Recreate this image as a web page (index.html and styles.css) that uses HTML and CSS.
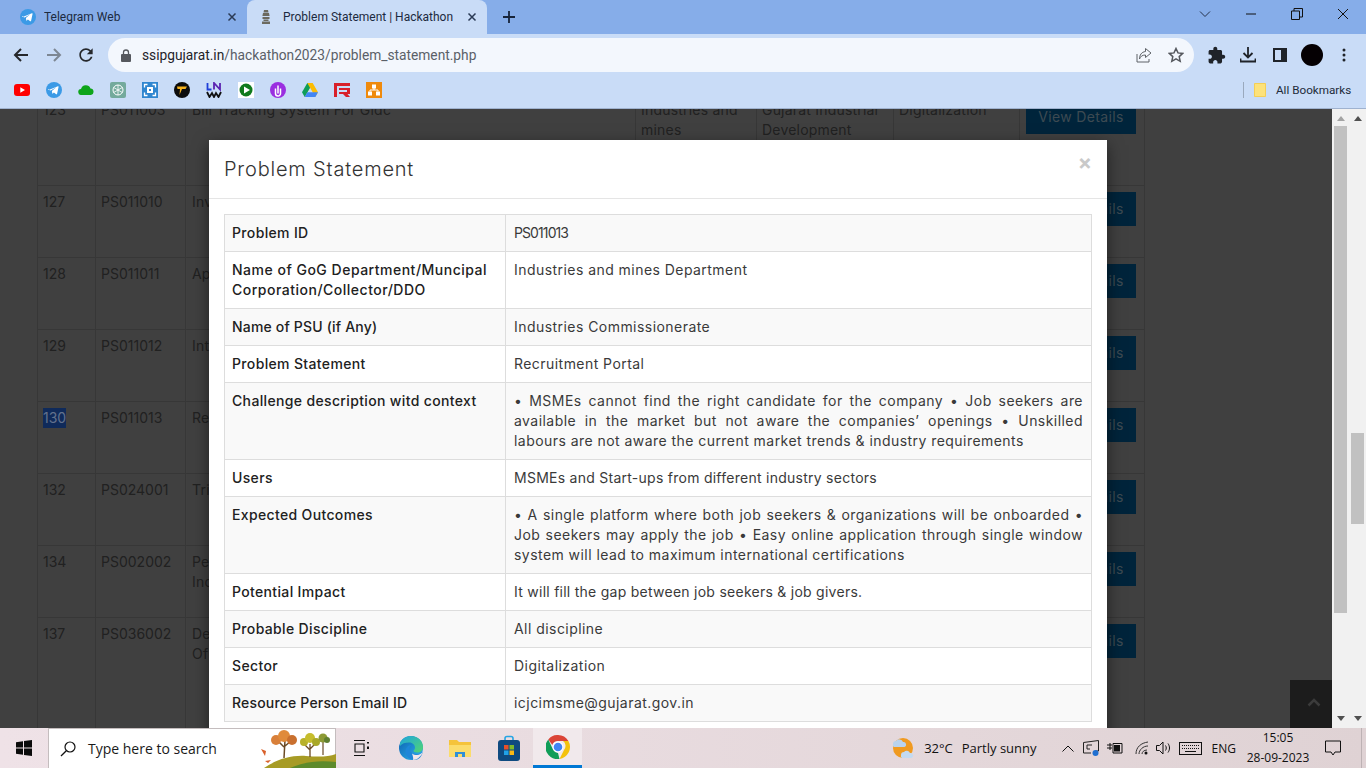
FILE: index.html
```html
<!DOCTYPE html>
<html lang="en">
<head>
<meta charset="utf-8">
<title>Problem Statement | Hackathon</title>
<link rel="stylesheet" href="styles.css">
</head>
<body>
<div class="tabstrip">
  <div class="tab">
    <svg class="fav" viewBox="0 0 16 16"><circle cx="8" cy="8" r="8" fill="#3b9ae6"/><path d="M3.200 7.800l8.700-3.600c.4-.2.8.1.7.6l-1.500 7c-.1.5-.5.6-.9.4l-2.300-1.700-1.100 1.100c-.2.2-.4.2-.5-.1l-.4-2.500 4.300-3.700-5.500 3.200-2.500-.8c-.4-.1-.4-.4 0-.6z" fill="#fff"/></svg>
    <span class="tabtitle">Telegram Web</span>
    <svg class="tabx" viewBox="0 0 10 10"><path d="M1.500 1.500l7 7M8.500 1.500l-7 7" stroke="#2a3a55" stroke-width="1.500"/></svg>
  </div>
  <div class="tab tab-active">
    <svg class="fav" viewBox="0 0 16 16"><path d="M6 1h4l.5 2.500h-5zM5 4h6l.6 3H4.400zM4.500 8h7v2h-7zM5.500 10.500h5v1.500h-5zM4 12.500h8V15H4z" fill="#6c6a60"/></svg>
    <span class="tabtitle">Problem Statement | Hackathon</span>
    <svg class="tabx" viewBox="0 0 10 10"><path d="M1.500 1.500l7 7M8.500 1.500l-7 7" stroke="#2a3a55" stroke-width="1.500"/></svg>
  </div>
  <svg class="newtab" viewBox="0 0 12 12"><path d="M6 0v12M0 6h12" stroke="#17243a" stroke-width="1.800"/></svg>
  <div class="winctl">
    <span class="wbtn"><svg viewBox="0 0 12 12" width="12" height="12"><path d="M1 3.500l5 5 5-5" fill="none" stroke="#26324a" stroke-width="1"/></svg></span>
    <span class="wbtn"><svg viewBox="0 0 12 12" width="12" height="12"><path d="M1 6h10" stroke="#111" stroke-width="1"/></svg></span>
    <span class="wbtn"><svg viewBox="0 0 12 12" width="12" height="12"><path d="M.5 3h8v8.500h-8zM3 3V.5h8.500V9H8.500" fill="none" stroke="#111" stroke-width="1"/></svg></span>
    <span class="wbtn"><svg viewBox="0 0 12 12" width="12" height="12"><path d="M1 1l10 10M11 1L1 11" stroke="#111" stroke-width="1"/></svg></span>
  </div>
</div>

<div class="toolbar">
  <span class="tbtn nav"><svg viewBox="0 0 16 16" width="16" height="16"><path d="M15 8H2M8 2L2 8l6 6" fill="none" stroke="#26282c" stroke-width="2"/></svg></span>
  <span class="tbtn nav"><svg viewBox="0 0 16 16" width="16" height="16"><path d="M1 8h13M8 2l6 6-6 6" fill="none" stroke="#7d8793" stroke-width="2"/></svg></span>
  <span class="tbtn nav"><svg viewBox="0 0 24 24" width="20" height="20"><path d="M17.650 6.350C16.200 4.900 14.210 4 12 4c-4.420 0-7.990 3.580-7.990 8s3.570 8 7.990 8c3.730 0 6.840-2.550 7.730-6h-2.080c-.82 2.330-3.040 4-5.650 4-3.310 0-6-2.690-6-6s2.690-6 6-6c1.660 0 3.140.69 4.220 1.780L13 11h7V4l-2.350 2.350z" fill="#26282c"/></svg></span>
  <div class="omnibox">
    <svg class="lock" viewBox="0 0 10 13" width="10" height="13"><path d="M2.500 5V3.500a2.500 2.500 0 0 1 5 0V5" fill="none" stroke="#55585e" stroke-width="1.300"/><rect y="5" width="10" height="8" rx="1" fill="#55585e"/></svg>
    <span class="url"><span class="host">ssipgujarat.in</span>/hackathon2023/problem_statement.php</span>
    <svg class="omni-share" viewBox="0 0 16 16" width="16" height="16"><path d="M1 7v8h12v-3" fill="none" stroke="#5f6368" stroke-width="1"/><path d="M9.500 1.500L15 6l-5.500 4.500V8C6 8 4.500 9.500 3.500 12c0-4 2-7 6-7.500z" fill="none" stroke="#5f6368" stroke-width="1"/></svg>
    <svg class="omni-star" viewBox="0 0 16 16" width="16" height="16"><path d="M8 1.500l2 4.400 4.700.5-3.500 3.200 1 4.700L8 11.900l-4.200 2.400 1-4.700-3.500-3.200 4.700-.5z" fill="none" stroke="#55585e" stroke-width="1.500"/></svg>
  </div>
  <span class="tbtn"><svg viewBox="0 0 24 24" width="19" height="19"><path d="M20.500 11H19V7c0-1.100-.9-2-2-2h-4V3.500C13 2.120 11.880 1 10.500 1S8 2.120 8 3.500V5H4c-1.100 0-1.990.9-1.990 2v3.800H3.500c1.490 0 2.700 1.210 2.700 2.700s-1.210 2.700-2.700 2.700H2V20c0 1.100.9 2 2 2h3.800v-1.500c0-1.490 1.210-2.700 2.700-2.700 1.490 0 2.700 1.210 2.700 2.700V22H17c1.100 0 2-.9 2-2v-4h1.500c1.380 0 2.500-1.120 2.500-2.500S21.880 11 20.500 11z" fill="#1f2329"/></svg></span>
  <span class="tbtn"><svg viewBox="0 0 16 16" width="16" height="16"><path d="M8 0v10M3.500 6L8 10.500 12.500 6M.5 11.500v3h15v-3" fill="none" stroke="#1f2329" stroke-width="1.800"/></svg></span>
  <span class="tbtn"><svg viewBox="0 0 14 14" width="14" height="14"><path d="M0 0h14v14H0z" fill="#1f2329"/><path d="M2 2h6v10H2z" fill="#c9dcf7"/></svg></span>
  <span class="tbtn"><span class="avatar"></span></span>
  <span class="tbtn"><svg viewBox="0 0 4 14" width="4" height="14"><circle cx="2" cy="2" r="1.500" fill="#1f2329"/><circle cx="2" cy="7" r="1.500" fill="#1f2329"/><circle cx="2" cy="12" r="1.500" fill="#1f2329"/></svg></span>
</div>

<div class="bookmarks">
  <span class="bm"><svg viewBox="0 0 16 12" width="16" height="12"><rect width="16" height="12" rx="3" fill="#f00"/><path d="M6.300 3.300v5.400L11 6z" fill="#fff"/></svg></span>
  <span class="bm"><svg viewBox="0 0 16 16" width="16" height="16"><circle cx="8" cy="8" r="8" fill="#3b9ae6"/><path d="M3.200 7.800l8.700-3.600c.4-.2.8.1.7.6l-1.500 7c-.1.5-.5.6-.9.4l-2.300-1.700-1.100 1.100c-.2.2-.4.2-.5-.1l-.4-2.500 4.300-3.700-5.500 3.200-2.500-.8c-.4-.1-.4-.4 0-.6z" fill="#fff"/></svg></span>
  <span class="bm"><svg viewBox="0 0 16 10" width="16" height="10"><path d="M3.500 10a3 3 0 0 1-.5-6A5 5 0 0 1 12.500 3.500 3.300 3.300 0 0 1 13 10z" fill="#0ea51a"/></svg></span>
  <span class="bm"><svg viewBox="0 0 16 16" width="16" height="16"><rect width="16" height="16" rx="2" fill="#74aa9c"/><circle cx="8" cy="8" r="5" fill="none" stroke="#fff" stroke-width="1"/><path d="M8 3v10M3.700 5.500l8.600 5M12.300 5.500l-8.600 5" stroke="#fff" stroke-width=".8"/></svg></span>
  <span class="bm"><svg viewBox="0 0 16 16" width="16" height="16"><rect width="16" height="16" fill="#2f86d0"/><path d="M2.500 5.500v-3h3M10.500 2.500h3v3M13.500 10.500v3h-3M5.500 13.500h-3v-3" fill="none" stroke="#fff" stroke-width="1.300"/><rect x="5" y="5" width="6" height="6" fill="#fff"/><rect x="7" y="7" width="2" height="2" fill="#2f86d0"/></svg></span>
  <span class="bm"><svg viewBox="0 0 16 16" width="16" height="16"><circle cx="8" cy="8" r="8" fill="#0c0c0c"/><path d="M3 4.500h10L11.500 7H8l-2.500 6L6 7H3.500z" fill="#f5b21d"/></svg></span>
  <span class="bm"><svg viewBox="0 0 16 16" width="16" height="16"><path d="M1.500 1v6.500h4" fill="none" stroke="#1e3fd8" stroke-width="1.800"/><path d="M8 7.500V1l6 6.500V1" fill="none" stroke="#5a22b0" stroke-width="1.800"/><path d="M1 10l2.500 5L6 11l2 4 2-4 2.500 4L15 10" fill="none" stroke="#111" stroke-width="1.800"/></svg></span>
  <span class="bm"><svg viewBox="0 0 16 16" width="16" height="16"><rect width="16" height="16" fill="#fff"/><circle cx="8" cy="8" r="6.500" fill="#0f7a1c"/><path d="M6 4.500v7L12 8z" fill="#fff"/></svg></span>
  <span class="bm"><svg viewBox="0 0 16 16" width="16" height="16"><circle cx="8" cy="8" r="8" fill="#9a2fe0"/><path d="M5.500 6.500V11.500a2.500 2.500 0 0 0 5 0V6.500M8 3.500v8" fill="none" stroke="#fff" stroke-width="1.500"/></svg></span>
  <span class="bm"><svg viewBox="0 0 16 14" width="16" height="14"><path d="M5.300 0h5.400l5.300 9.300-2.700 4.700L8 4.600 2.700 14z" fill="#fbbc04"/><path d="M5.300 0L0 9.300 2.700 14 8 4.700z" fill="#0f9d58"/><path d="M5.300 9.300H16L13.300 14H2.700z" fill="#4285f4"/></svg></span>
  <span class="bm"><svg viewBox="0 0 16 16" width="16" height="16"><path d="M0 1h16v3H3v11H0zM5 6h11v6h-2.500l2.500 3h-4l-3-3H5v-2h8V8H5z" fill="#d8202a"/></svg></span>
  <span class="bm"><svg viewBox="0 0 16 16" width="16" height="16"><rect width="16" height="16" fill="#ef8a0c"/><rect x="6" y="2.500" width="4" height="4" fill="#fff"/><rect x="2" y="9.500" width="4" height="4" fill="#fff"/><rect x="10" y="9.500" width="4" height="4" fill="#fff"/><path d="M8 6v2M4 9.500V8h8v1.500" fill="none" stroke="#fff"/></svg></span>
  <span class="bm-sep"></span>
  <svg class="bm-folder" viewBox="0 0 12 14" width="12" height="14"><path d="M.5.500h11v13H.5z" fill="#fde27a" stroke="#f5cf55"/></svg>
  <span class="bm-all">All Bookmarks</span>
</div>

<div class="viewport">
  <main class="page">
    <table class="list">
      <colgroup>
        <col class="c1"><col class="c2"><col class="c3"><col class="c4"><col class="c5"><col class="c6"><col class="c7">
      </colgroup>
      <tr class="row-first"><td>123</td><td>PS011003</td><td>Bill Tracking System For Gidc</td><td>Industries and mines Department</td><td>Gujarat Industrial Development Corporation</td><td>Digitalization</td><td><a class="view">View Details</a></td></tr>
      <tr><td>127</td><td>PS011010</td><td>Inventory</td><td></td><td></td><td></td><td><a class="view">View Details</a></td></tr>
      <tr><td>128</td><td>PS011011</td><td>Application</td><td></td><td></td><td></td><td><a class="view">View Details</a></td></tr>
      <tr><td>129</td><td>PS011012</td><td>Integrated</td><td></td><td></td><td></td><td><a class="view">View Details</a></td></tr>
      <tr><td><span class="picked">130</span></td><td>PS011013</td><td>Recruitment Portal</td><td></td><td></td><td></td><td><a class="view">View Details</a></td></tr>
      <tr><td>132</td><td>PS024001</td><td>Tribal</td><td></td><td></td><td></td><td><a class="view">View Details</a></td></tr>
      <tr><td>134</td><td>PS002002</td><td>Pet<br>Industry</td><td></td><td></td><td></td><td><a class="view">View Details</a></td></tr>
      <tr class="row-last"><td>137</td><td>PS036002</td><td>Department<br>Of</td><td></td><td></td><td></td><td><a class="view">View Details</a></td></tr>
    </table>

    <section class="modal">
      <header class="modal-head">
        <h4 class="modal-title">Problem Statement</h4>
        <span class="modal-x">×</span>
      </header>
      <div class="modal-body">
        <table class="info">
          <colgroup><col class="k"><col class="v"></colgroup>
          <tr><th>Problem ID</th><td class="num">PS011013</td></tr>
          <tr><th class="th-wide">Name of GoG Department/Muncipal Corporation/Collector/DDO</th><td>Industries and mines Department</td></tr>
          <tr><th class="th-narrow">Name of PSU (if Any)</th><td>Industries Commissionerate</td></tr>
          <tr><th>Problem Statement</th><td>Recruitment Portal</td></tr>
          <tr><th>Challenge description witd context</th><td><span class="jl">• MSMEs cannot find the right candidate for the company • Job seekers are</span><span class="jl">available in the market but not aware the companies’ openings • Unskilled</span><span class="ll">labours are not aware the current market trends &amp; industry requirements</span></td></tr>
          <tr><th>Users</th><td class="tight">MSMEs and Start-ups from different industry sectors</td></tr>
          <tr><th>Expected Outcomes</th><td><span class="jl">• A single platform where both job seekers &amp; organizations will be onboarded •</span><span class="jl">Job seekers may apply the job • Easy online application through single window</span><span class="ll">system will lead to maximum international certifications</span></td></tr>
          <tr><th>Potential Impact</th><td class="tight">It will fill the gap between job seekers &amp; job givers.</td></tr>
          <tr><th>Probable Discipline</th><td>All discipline</td></tr>
          <tr><th>Sector</th><td>Digitalization</td></tr>
          <tr><th class="th-narrow">Resource Person Email ID</th><td>icjcimsme@gujarat.gov.in</td></tr>
        </table>
      </div>
    </section>

    <a class="totop"><svg viewBox="0 0 14 9" width="14" height="9"><path d="M1.500 7.500L7 2l5.500 5.500" fill="none" stroke="#3b3b3b" stroke-width="2.500"/></svg></a>
  </main>
  <div class="scrollbars">
    <div class="sb">
      <span class="arr-up arr-light"></span>
      <span class="thumb thumb-a"></span>
      <span class="arr-down"></span>
    </div>
    <div class="sb">
      <span class="arr-up"></span>
      <span class="thumb thumb-b"></span>
      <span class="arr-down"></span>
    </div>
  </div>
</div>

<footer class="taskbar">
  <span class="start"><svg viewBox="0 0 16 16" width="16" height="16"><path d="M0 2.300l7-1v6.300H0zM8 1.100l8-1.100v7.600H8zM0 8.400h7v6.300l-7-1zM8 8.400h8V16l-8-1.100z" fill="#0b0b0b"/></svg></span>
  <div class="search">
    <svg class="mag" viewBox="0 0 16 16" width="16" height="16"><circle cx="10" cy="6" r="5" fill="none" stroke="#111" stroke-width="1.200"/><path d="M6.300 9.700L1 15" stroke="#111" stroke-width="1.300"/></svg>
    <span class="search-text">Type here to search</span>
    <svg class="trees" viewBox="0 0 76 39" width="76" height="39">
      <path d="M4 39C16 31 30 26 46 27c12 1 22 1 30-2v14z" fill="#a79b25"/>
      <path d="M30 39c14-6 28-8 46-6v6z" fill="#5d8a2b"/>
      <path d="M24 29l1-18M24 18l-6-6M25 17l6-5" stroke="#6b4a25" stroke-width="1.500" fill="none"/>
      <circle cx="16" cy="11" r="5" fill="#d9803a"/><circle cx="24" cy="7" r="6" fill="#e08b3b"/><circle cx="32" cy="11" r="5" fill="#c9702f"/>
      <path d="M50 28V15M50 21l-5-5M50 20l5-5" stroke="#6b4a25" stroke-width="1.300" fill="none"/>
      <circle cx="44" cy="13" r="4" fill="#b8b12a"/><circle cx="50" cy="9" r="5" fill="#c6bd2d"/><circle cx="56" cy="13" r="4" fill="#a9a828"/>
      <path d="M63 26V12" stroke="#6b4a25" stroke-width="1.200"/>
      <circle cx="63" cy="9" r="4.500" fill="#8c9a35"/><circle cx="67" cy="11" r="3" fill="#5f7f30"/>
      <path d="M1 20l5 2-1 5zM5 32l6-1-3 3z" fill="#d9602a"/>
    </svg>
  </div>
  <span class="tb-app"><svg viewBox="0 0 16 16" width="16" height="16"><path d="M1 .5h11M1 15.500h11M2 4h9v8H2z" fill="none" stroke="#111" stroke-width="1.100"/><path d="M14 2h2v1.500h-2zM14 6.500h2V9h-2z" fill="#111"/></svg></span>
  <span class="tb-app tb-edge"><svg viewBox="0 0 24 24" width="24" height="24"><defs><linearGradient id="edgeb" x1="0" y1="0" x2="1" y2="1"><stop offset="0" stop-color="#0b5fb0"/><stop offset="1" stop-color="#2fb5ee"/></linearGradient><linearGradient id="edgeg" x1="0" y1="0" x2="1" y2="1"><stop offset="0" stop-color="#1ea4e0"/><stop offset="1" stop-color="#52d66f"/></linearGradient></defs><circle cx="12" cy="12" r="12" fill="url(#edgeb)"/><path d="M1 7C3 2.500 7 0 12 0c7 0 12 5 12 11 0 3.500-2.500 5.500-6 5.500-2.500 0-3.500-1-3.500-2 1-.7 1.500-1.700 1.500-3 0-3-3-5-6-5C6 6.500 3 7.500 1 10z" fill="url(#edgeg)"/><path d="M24 15.500c-1 1.500-3 2.800-6 2.800-4 0-7.500-2-7.500-5.800 0-1.500.8-3 2.300-3.800-3.800.2-6.300 3.300-6.300 6.800 0 4.500 4 8.500 9 8.500 4 0 7-2.800 8.500-8.500z" fill="#1e86d8"/><path d="M14 24c4 0 8-3.500 10-8-1.500 1.500-3.500 3-6 3-2 0-3.500-.5-5-1.500 1 3 1.500 5 1 6.500z" fill="#f1e7ea"/></svg></span>
  <span class="tb-app"><svg viewBox="0 0 22 18" width="22" height="18"><path d="M0 1h8l2 2h12v15H0z" fill="#f5c33b"/><path d="M0 6h22v12H0z" fill="#fbdc6c"/><path d="M6 18v-5h10v5h-3v-3H9v3z" fill="#2f8fd8"/></svg></span>
  <span class="tb-app"><svg viewBox="0 0 22 26" width="22" height="26"><path d="M7 6V3.500a2 2 0 0 1 2-2h4a2 2 0 0 1 2 2V6" fill="none" stroke="#26a5e4" stroke-width="1.600"/><rect y="5" width="22" height="21" rx="3" fill="#0f4a80"/><rect x="6" y="10" width="4.500" height="4.500" fill="#e8502a"/><rect x="11.500" y="10" width="4.500" height="4.500" fill="#7fba2a"/><rect x="6" y="15.500" width="4.500" height="4.500" fill="#21a2e8"/><rect x="11.500" y="15.500" width="4.500" height="4.500" fill="#fbb814"/></svg></span>
  <span class="tb-app tb-active"><svg viewBox="0 0 24 24" width="24" height="24"><path d="M12 0a12 12 0 0 1 10.400 6H12a6 6 0 0 0-5.700 4L2.300 4.400A12 12 0 0 1 12 0z" fill="#db4437"/><path d="M22.400 6a12 12 0 0 1-8.900 17.900L18 15a6 6 0 0 0-1-8.900z" fill="#f4c20d"/><path d="M2.300 4.400L7.200 15a6 6 0 0 0 4.800 3l1.500 5.900A12 12 0 0 1 2.300 4.400z" fill="#0f9d58"/><circle cx="12" cy="12" r="5.400" fill="#fff"/><circle cx="12" cy="12" r="4.300" fill="#4285f4"/></svg></span>
  <div class="tray">
    <svg class="weather" viewBox="0 0 24 24" width="24" height="24"><circle cx="13" cy="12" r="10" fill="#f09a20"/><path d="M3 8a3 3 0 0 1 3-3 4 4 0 0 1 7 1 2.500 2.500 0 0 1 1 5H4a2.500 2.500 0 0 1-1-3z" fill="#b9d3ee"/><path d="M11 19a3 3 0 0 1 3-3 3.500 3.500 0 0 1 6 1 2.500 2.500 0 0 1 1 5H12a2.500 2.500 0 0 1-1-3z" fill="#c3daf1"/></svg>
    <span class="temp">32°C</span>
    <span class="cond">Partly sunny</span>
    <svg class="t-caret" viewBox="0 0 12 7" width="12" height="7"><path d="M.5 6.500L6 1l5.500 5.500" fill="none" stroke="#111" stroke-width="1"/></svg>
    <svg class="t-sec" viewBox="0 0 16 16" width="16" height="16"><path d="M.5 2.500l15-2V11H12M.5 2.500V13H8" fill="none" stroke="#222"/><path d="M4 5h5M4 5v4h3" fill="none" stroke="#222"/><circle cx="12.500" cy="13" r="3" fill="#1f6fd0"/></svg>
    <svg class="t-bat" viewBox="0 0 16 12" width="16" height="12"><path d="M0 3h5M0 6h5M3 1v7M6 1.500h9V11H6z" fill="none" stroke="#111"/><rect x="7" y="3" width="6" height="6.500" fill="#111"/></svg>
    <svg class="t-wifi" viewBox="0 0 14 14" width="14" height="14"><path d="M1 13C1 6 6 2 13 1M4 13C4 9 8 5 13 5M7 13c0-2 2-4 5-4" fill="none" stroke="#333" stroke-width="1"/><circle cx="11" cy="12" r="1.500" fill="#111"/></svg>
    <svg class="t-vol" viewBox="0 0 16 14" width="16" height="14"><path d="M.5 4.500h3L7 1v12L3.500 9.500h-3zM9.500 4.500c1 1.500 1 3.500 0 5M12 2.500c2 3 2 6 0 9" fill="none" stroke="#111"/></svg>
    <svg class="t-kbd" viewBox="0 0 23 13" width="23" height="13"><rect x=".5" y=".5" width="22" height="12" fill="none" stroke="#111"/><path d="M3 3.500h17M3 6.500h17" stroke="#111" stroke-dasharray="1 1"/><path d="M6 9.500h11" stroke="#111"/></svg>
    <span class="lang">ENG</span>
    <span class="clock"><span>15:05</span><span>28-09-2023</span></span>
    <svg class="notify" viewBox="0 0 16 16" width="16" height="16"><path d="M.5 1h15v11H10l-2 3-2-3H.5z" fill="none" stroke="#111"/></svg>
    <span class="showdesk"></span>
  </div>
</footer>
</body>
</html>
```
FILE: styles.css
```css
* { box-sizing: border-box; }
html, body { margin: 0; padding: 0; height: 768px; overflow: hidden; }
body { font-family: "Open Sans", "Noto Sans", sans-serif; display: flex; flex-direction: column; background: #404040; }
svg { display: block; flex: none; }

.tabstrip { height: 34px; background: #86ade9; display: flex; align-items: flex-start; padding-left: 8px; flex: none; }
.tab { width: 239px; height: 34px; display: flex; align-items: center; padding: 0 10px 0 12px; flex: none; }
.tab-active { width: 240px; background: #c9dcf7; border-radius: 8px 8px 0 0; padding-left: 11px; }
.fav { width: 16px; height: 16px; margin-right: 8px; }
.tab-active .fav { margin-right: 9px; }
.tabtitle { font-family: "Roboto", sans-serif; font-size: 12px; color: #1c2a40; white-space: nowrap; flex: 1; overflow: hidden; }
.tabx { width: 10px; height: 10px; }
.newtab { width: 12px; height: 12px; margin: 11px 0 0 16px; }
.winctl { margin-left: auto; display: flex; height: 28px; }
.wbtn { width: 46px; height: 28px; display: flex; align-items: center; justify-content: center; }

.toolbar { height: 38px; background: #c9dcf7; display: flex; align-items: center; padding: 4px 6px 0 5px; flex: none; }
.tbtn { width: 32px; height: 32px; display: flex; align-items: center; justify-content: center; flex: none; }
.nav { width: 32.500px; }
.omnibox { flex: 1; height: 34px; border-radius: 17px; background: #f3f7fd; margin: 0 6px 0 5.500px; display: flex; align-items: center; padding: 0 10px 0 13px; }
.url { font-family: "Roboto", sans-serif; font-size: 13.750px; color: #5a6068; margin-left: 11px; white-space: nowrap; }
.host { color: #1f2329; }
.omni-share { margin-left: auto; }
.omni-star { margin-left: 16px; }
.avatar { width: 22px; height: 22px; border-radius: 50%; background: #050003; display: block; }

.bookmarks { height: 37px; background: #c9dcf7; border-bottom: 1px solid #9fb2cf; display: flex; align-items: center; padding-left: 6px; flex: none; }
.bm { width: 32px; height: 20px; display: flex; align-items: center; justify-content: center; flex: none; }
.bm-sep { width: 1px; height: 16px; background: #9aa9bd; margin-left: 853px; }
.bm-folder { margin-left: 10px; }
.bm-all { font-family: "Roboto", sans-serif; font-size: 11.700px; color: #222b3a; margin-left: 10px; white-space: nowrap; }

.viewport { height: 619px; display: flex; flex: none; }
.page { width: 1332px; height: 619px; background: #404040; position: relative; overflow: hidden; flex: none; font-family: "Inter", "Noto Sans", sans-serif; font-size: 14px; line-height: 20px; letter-spacing: .35px; }

.list { border-collapse: collapse; table-layout: fixed; width: 1107px; margin: -16px 0 0 37px; color: #212121; }
.list td { border: 1px solid #373737; padding: 6px 5px; vertical-align: top; height: 72px; letter-spacing: .2px; }
.list td:nth-child(1), .list td:nth-child(2) { letter-spacing: 0; }
.list td:nth-child(3) { padding-left: 6px; }
.list .row-first td { height: 92px; }
.list .row-last td { height: 140px; }
.c1 { width: 58px; } .c2 { width: 90px; } .c3 { width: 450px; } .c4 { width: 121px; } .c5 { width: 137px; } .c6 { width: 126px; } .c7 { width: 125px; }
.picked { background: #0f2a5a; color: #62718c; display: inline-block; padding: 0; }
.view { display: block; width: 110px; height: 34px; background: #00243b; color: #3d4a52; margin-left: 1px; padding: 7px 0; text-align: center; letter-spacing: .35px; }

.modal { position: absolute; left: 209px; top: 31px; width: 898px; height: 700px; background: #fff; box-shadow: 0 5px 15px rgba(0,0,0,.5); }
.modal-head { height: 59px; border-bottom: 1px solid #e5e5e5; display: flex; align-items: center; justify-content: space-between; padding: 0 15px; }
.modal-title { margin: 0; font-size: 20px; line-height: 28px; font-weight: 300; color: #333; letter-spacing: .8px; }
.modal-x { font-size: 21px; font-weight: 700; color: #c9c9c9; line-height: 1; margin: -14px 0 0 0; letter-spacing: 0; }
.modal-body { padding: 15px; }
.info { border-collapse: collapse; table-layout: fixed; width: 867px; }
.info th, .info td { border: 1px solid #ddd; padding: 8px; vertical-align: top; text-align: left; line-height: 20px; }
.info th { font-weight: 500; color: #212121; letter-spacing: .35px; padding-left: 7px; }
.info th.th-wide { letter-spacing: .5px; }
.info th.th-narrow { letter-spacing: .18px; }
.info td { font-weight: 400; color: #3a3a3a; letter-spacing: .45px; }
.info td.tight { letter-spacing: .26px; }
.info td.num { letter-spacing: -.9px; }
.info tr:nth-child(odd) { background: #f9f9f9; }
.k { width: 281px; } .v { width: 586px; }
.jl { display: block; text-align: justify; text-align-last: justify; }
.ll { display: block; }

.totop { position: absolute; right: -6px; bottom: 0; width: 48px; height: 48px; background: #1c1c1c; display: flex; align-items: center; justify-content: center; padding-bottom: 4px; }

.scrollbars { width: 34px; height: 619px; background: #f1f1f1; display: flex; flex: none; }
.sb { width: 17px; display: flex; flex-direction: column; align-items: center; }
.arr-up { width: 0; height: 0; border: 4px solid transparent; border-top: 0; border-bottom: 5px solid #505050; margin-top: 7px; flex: none; }
.arr-light { border-bottom-color: #a3a3a3; }
.arr-down { width: 0; height: 0; border: 4px solid transparent; border-bottom: 0; border-top: 5px solid #505050; margin-top: auto; margin-bottom: 7px; flex: none; }
.thumb { width: 13px; background: #c1c1c1; flex: none; }
.thumb-a { height: 487px; margin-top: 5px; }
.thumb-b { height: 91px; margin-top: 312px; }

.taskbar { height: 40px; background: linear-gradient(90deg, #efe2e7 0%, #e9dce0 40%, #dfd2d4 100%); display: flex; align-items: center; flex: none; position: relative; }
.start { width: 48px; height: 40px; display: flex; align-items: center; justify-content: center; }
.search { width: 288px; height: 40px; background: #fff; border: 1px solid #c4bdbe; border-bottom: 0; display: flex; align-items: center; padding-left: 11px; }
.mag { flex: none; }
.search-text { font-size: 14px; color: #1a1a1a; margin-left: 12px; white-space: nowrap; }
.trees { margin-left: auto; align-self: flex-end; margin-right: -1px; }
.tb-app { width: 49px; height: 40px; display: flex; align-items: center; justify-content: center; flex: none; }
.tb-edge { margin-left: 1px; }
.tb-active { background: #f1e9ec; border-bottom: 3px solid #0078d4; }
.tray { margin-left: auto; display: flex; align-items: center; height: 40px; color: #111; font-size: 13px; white-space: nowrap; }
.weather { margin-right: 10px; }
.cond { margin-left: 9px; }
.t-caret { margin-left: 25px; }
.t-sec { margin-left: 9px; }
.t-bat { margin-left: 8px; }
.t-wifi { margin-left: 12px; }
.t-vol { margin-left: 7px; }
.t-kbd { margin-left: 7px; }
.lang { font-size: 12px; margin-left: 10px; }
.clock { display: flex; flex-direction: column; align-items: center; font-size: 12px; line-height: 20px; margin-left: 13px; width: 58px; }
.notify { margin: 0 0 0 18px; }
.showdesk { width: 1px; height: 40px; background: #bdb2b4; margin: 0 4px 0 20px; }
```
